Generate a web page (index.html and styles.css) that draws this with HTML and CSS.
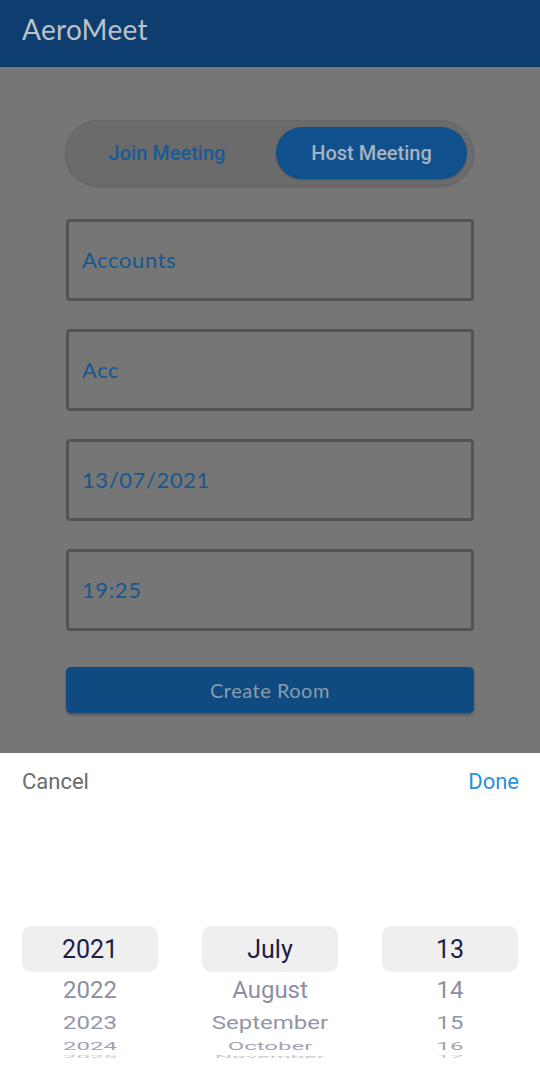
FILE: index.html
```html
<!DOCTYPE html>
<html lang="en">
<head>
<meta charset="utf-8">
<title>AeroMeet</title>
<link rel="stylesheet" href="styles.css">
</head>
<body>
<div class="app">
  <header class="appbar"><span class="title">AeroMeet</span></header>
  <main class="content">
    <div class="toggle">
      <div class="tab">Join Meeting</div>
      <div class="tab active">Host Meeting</div>
    </div>
    <div class="fields">
      <div class="field">Accounts</div>
      <div class="field">Acc</div>
      <div class="field">13/07/2021</div>
      <div class="field">19:25</div>
    </div>
    <div class="create">Create Room</div>
  </main>
  <section class="sheet">
    <div class="sheet-bar">
      <span class="cancel">Cancel</span>
      <span class="done">Done</span>
    </div>
    <div class="wheels">
      <div class="wheel">
        <div class="item sel">2021</div>
        <div class="item r2"><span>2022</span></div>
        <div class="item r3"><span>2023</span></div>
        <div class="item r4"><span>2024</span></div>
        <div class="item r5"><span>2025</span></div>
      </div>
      <div class="wheel">
        <div class="item sel">July</div>
        <div class="item r2"><span>August</span></div>
        <div class="item r3"><span>September</span></div>
        <div class="item r4"><span>October</span></div>
        <div class="item r5"><span>November</span></div>
      </div>
      <div class="wheel">
        <div class="item sel">13</div>
        <div class="item r2"><span>14</span></div>
        <div class="item r3"><span>15</span></div>
        <div class="item r4"><span>16</span></div>
        <div class="item r5"><span>17</span></div>
      </div>
    </div>
  </section>
</div>
</body>
</html>
```

FILE: styles.css
```css
* { box-sizing: border-box; }
html, body { margin: 0; padding: 0; }
body {
  width: 540px;
  height: 1079px;
  overflow: hidden;
  background: #767676;
  font-family: Lato, "Open Sans", sans-serif;
}
.app { display: flex; flex-direction: column; height: 1079px; }

.appbar {
  height: 67px;
  flex: none;
  background: #0e3e6f;
  display: flex;
  align-items: center;
  padding-left: 22px;
  border-bottom: 1px solid #0b3866;
}
.title {
  color: #bcc2c8;
  font-size: 28px;
  letter-spacing: 0.3px;
  padding-bottom: 8px;
}

.content {
  height: 686px;
  flex: none;
  background: #767676;
  padding: 53px 66px 0 65px;
  display: flex;
  flex-direction: column;
}

.toggle {
  height: 66px;
  border-radius: 33px;
  background: #6b6b6b;
  border: 1px solid #666;
  display: flex;
  align-items: center;
  padding: 6px 6px 6px 0;
  box-shadow: 0 1px 2px rgba(0,0,0,0.15);
}
.tab {
  flex: 1;
  text-align: center;
  font-family: Roboto, sans-serif;
  font-weight: 500;
  font-size: 20px;
  color: #1a5a95;
  padding-right: 8px;
}
.tab.active {
  flex: none;
  width: 191px;
  height: 52px;
  border-radius: 26px;
  background: #0f508d;
  color: #a7b3bf;
  display: flex;
  align-items: center;
  justify-content: center;
  padding-right: 0;
  box-shadow: 0 1px 2px rgba(0,0,0,0.2);
}

.fields {
  margin-top: 33px;
  display: flex;
  flex-direction: column;
  gap: 28px;
  padding-left: 1px;
}
.field {
  height: 82px;
  border: 3px solid #535353;
  border-radius: 4px;
  display: flex;
  align-items: center;
  padding-left: 13px;
  padding-bottom: 2px;
  font-size: 22px;
  letter-spacing: 0.6px;
  color: #17568f;
}

.create {
  margin-top: 36px;
  margin-left: 1px;
  height: 46px;
  border-radius: 5px;
  background: #0f4a80;
  color: #8c9cab;
  font-size: 20px;
  letter-spacing: 0.5px;
  display: flex;
  align-items: center;
  justify-content: center;
  box-shadow: 0 2px 3px rgba(0,0,0,0.3);
}

.sheet {
  flex: 1;
  background: #fff;
  display: flex;
  flex-direction: column;
}
.sheet-bar {
  height: 56px;
  display: flex;
  justify-content: space-between;
  align-items: center;
  padding: 0 21px 0 22px;
  font-family: Roboto, sans-serif;
  font-size: 22px;
}
.cancel { color: #6b6b6b; }
.done { color: #2b90da; }

.wheels {
  margin-top: 117px;
  display: flex;
  gap: 44px;
  padding: 0 22px;
}
.wheel {
  width: 136px;
  display: flex;
  flex-direction: column;
  font-family: Roboto, sans-serif;
  font-size: 24px;
}
.item {
  display: flex;
  align-items: center;
  justify-content: center;
  overflow: hidden;
  line-height: 1;
}
.item span { display: block; }
.sel {
  height: 46px;
  border-radius: 9px;
  background: #efefef;
  color: #1c1c48;
  font-size: 25px;
}
.r2 { height: 36px; color: #8e8ea2; }
.r3 { height: 30px; color: #9494a8; }
.r3 span { transform: scaleY(0.76); }
.r4 { height: 16px; color: #a2a2b4; }
.r4 span { transform: scaleY(0.45); }
.r5 { height: 5px; color: #c4c4d0; }
.r5 span { transform: scaleY(0.15); }
```
